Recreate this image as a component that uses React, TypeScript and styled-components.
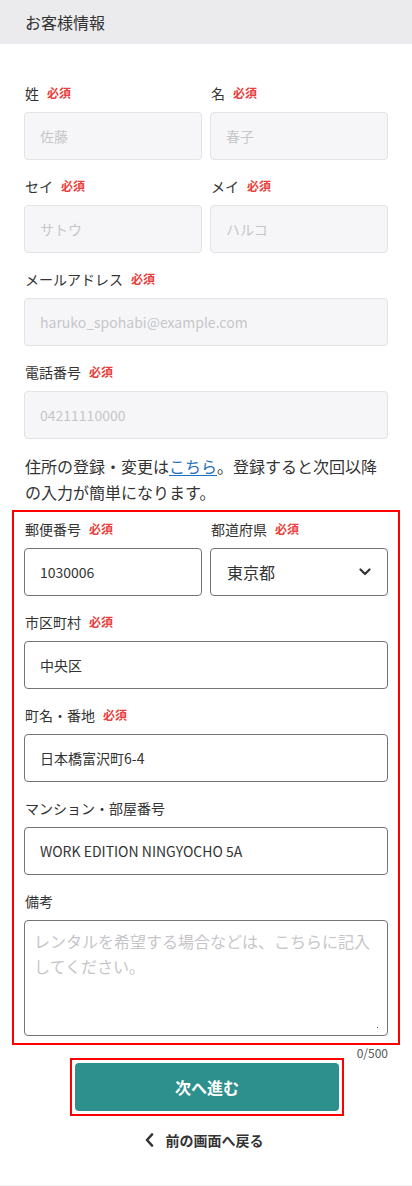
import React from "react";
import styled, { createGlobalStyle } from "styled-components";

const Global = createGlobalStyle`
  html, body { margin: 0; padding: 0; background: #fff; }
  body {
    font-family: "Noto Sans CJK JP", "Noto Sans", sans-serif;
    color: #333;
    -webkit-font-smoothing: antialiased;
  }
  * { box-sizing: border-box; }
`;

const Page = styled.div`
  width: 412px;
  min-height: 1186px;
  display: flex;
  flex-direction: column;
  background: #fff;
`;

const Header = styled.header`
  height: 44px;
  background: #ebebed;
  padding: 0 25px;
  display: flex;
  align-items: center;
  font-size: 16px;
  color: #333;
`;

const Main = styled.main`
  padding: 39px 24px 0;
  display: flex;
  flex-direction: column;
`;

const Stack = styled.div`
  display: flex;
  flex-direction: column;
  gap: 16px;
`;

const Row = styled.div`
  display: grid;
  grid-template-columns: 1fr 1fr;
  gap: 8px;
`;

const Field = styled.div`
  display: flex;
  flex-direction: column;
  min-width: 0;
`;

const Label = styled.label`
  height: 20px;
  line-height: 20px;
  margin: 0 0 9px 1px;
  font-size: 14px;
  color: #333;
  display: flex;
  align-items: center;
`;

const Required = styled.span`
  margin-left: 8px;
  font-size: 12px;
  font-weight: 700;
  color: #e8403c;
`;

const Input = styled.input<{ $locked?: boolean }>`
  height: 48px;
  width: 100%;
  padding: 0 15px;
  border-radius: 4px;
  border: 1px solid ${(p) => (p.$locked ? "#e3e3e6" : "#747474")};
  background: ${(p) => (p.$locked ? "#f6f6f8" : "#fff")};
  font-family: inherit;
  font-size: 14px;
  color: #333;
  outline: none;
  &::placeholder { color: #c6c6ca; }
  &:disabled { color: #c6c6ca; }
`;

const SelectWrap = styled.div`
  position: relative;
  height: 48px;
`;

const Select = styled.select`
  appearance: none;
  -webkit-appearance: none;
  width: 100%;
  height: 48px;
  padding: 0 40px 0 16px;
  border-radius: 4px;
  border: 1px solid #747474;
  background: #fff;
  font-family: inherit;
  font-size: 16px;
  color: #333;
  outline: none;
`;

const Chevron = styled.svg`
  position: absolute;
  right: 17px;
  top: 20px;
  width: 12px;
  height: 8px;
  pointer-events: none;
`;

const Note = styled.p`
  margin: 14px 0 0 1px;
  font-size: 16px;
  line-height: 26px;
  color: #333;
`;

const NoteLink = styled.a`
  color: #1f6fc0;
  text-decoration: underline;
  text-underline-offset: 2px;
`;

const Highlight = styled.section`
  margin: 5px -12px 0;
  border: 2px solid #f00;
  padding: 7px 10px 7px;
`;

const TextAreaWrap = styled.div`
  position: relative;
`;

const TextArea = styled.textarea`
  height: 116px;
  width: 100%;
  padding: 8px 9px;
  border-radius: 4px;
  border: 1px solid #747474;
  background: #fff;
  font-family: inherit;
  font-size: 16px;
  line-height: 25px;
  color: #333;
  outline: none;
  resize: none;
  display: block;
  &::placeholder { color: #c6c6ca; }
`;

const ResizeDot = styled.span`
  position: absolute;
  right: 10px;
  bottom: 8px;
  width: 1px;
  height: 1px;
  background: #555;
`;

const Counter = styled.div`
  text-align: right;
  font-size: 12px;
  line-height: 16px;
  color: #555;
  margin-bottom: -3px;
`;

const ButtonFrame = styled.div`
  align-self: center;
  border: 2px solid #f00;
  padding: 3px;
  margin-left: 2px;
`;

const PrimaryButton = styled.button`
  width: 264px;
  height: 48px;
  border: none;
  border-radius: 4px;
  background: #2e908c;
  color: #fff;
  font-family: inherit;
  font-size: 16px;
  font-weight: 700;
  display: block;
  cursor: pointer;
`;

const BackLink = styled.a`
  align-self: center;
  margin: 14px 0 0 -4px;
  height: 20px;
  display: flex;
  align-items: center;
  gap: 12px;
  font-size: 14px;
  font-weight: 700;
  color: #333;
  text-decoration: none;
`;

const Spacer = styled.div`
  flex: 1;
  min-height: 35px;
`;

const BottomRule = styled.div`
  height: 1px;
  background: #f0f0f0;
`;

function Req() {
  return <Required>必須</Required>;
}

export default function App() {
  return (
    <>
      <Global />
      <Page>
        <Header>お客様情報</Header>
        <Main>
          <Stack>
            <Row>
              <Field>
                <Label>姓<Req /></Label>
                <Input $locked disabled placeholder="佐藤" />
              </Field>
              <Field>
                <Label>名<Req /></Label>
                <Input $locked disabled placeholder="春子" />
              </Field>
            </Row>
            <Row>
              <Field>
                <Label>セイ<Req /></Label>
                <Input $locked disabled placeholder="サトウ" />
              </Field>
              <Field>
                <Label>メイ<Req /></Label>
                <Input $locked disabled placeholder="ハルコ" />
              </Field>
            </Row>
            <Field>
              <Label>メールアドレス<Req /></Label>
              <Input $locked disabled placeholder="haruko_spohabi@example.com" />
            </Field>
            <Field>
              <Label>電話番号<Req /></Label>
              <Input $locked disabled placeholder="04211110000" />
            </Field>
          </Stack>
          <Note>
            住所の登録・変更は<NoteLink href="#">こちら</NoteLink>。登録すると次回以降の入力が簡単になります。
          </Note>
          <Highlight>
            <Stack>
              <Row>
                <Field>
                  <Label>郵便番号<Req /></Label>
                  <Input defaultValue="1030006" />
                </Field>
                <Field>
                  <Label>都道府県<Req /></Label>
                  <SelectWrap>
                    <Select defaultValue="東京都">
                      <option value="東京都">東京都</option>
                    </Select>
                    <Chevron viewBox="0 0 12 8">
                      <path d="M1.5 1.5 L6 6 L10.5 1.5" fill="none" stroke="#333" strokeWidth="2.2" strokeLinecap="round" strokeLinejoin="round" />
                    </Chevron>
                  </SelectWrap>
                </Field>
              </Row>
              <Field>
                <Label>市区町村<Req /></Label>
                <Input defaultValue="中央区" />
              </Field>
              <Field>
                <Label>町名・番地<Req /></Label>
                <Input defaultValue="日本橋富沢町6-4" />
              </Field>
              <Field>
                <Label>マンション・部屋番号</Label>
                <Input defaultValue="WORK EDITION NINGYOCHO 5A" />
              </Field>
              <Field>
                <Label>備考</Label>
                <TextAreaWrap>
                  <TextArea placeholder="レンタルを希望する場合などは、こちらに記入してください。" />
                  <ResizeDot />
                </TextAreaWrap>
              </Field>
            </Stack>
          </Highlight>
          <Counter>0/500</Counter>
          <ButtonFrame>
            <PrimaryButton>次へ進む</PrimaryButton>
          </ButtonFrame>
          <BackLink href="#">
            <svg width="9" height="14" viewBox="0 0 9 14">
              <path d="M7 1.5 L2 7 L7 12.5" fill="none" stroke="#333" strokeWidth="2.6" strokeLinecap="round" strokeLinejoin="round" />
            </svg>
            前の画面へ戻る
          </BackLink>
        </Main>
        <Spacer />
        <BottomRule />
      </Page>
    </>
  );
}
